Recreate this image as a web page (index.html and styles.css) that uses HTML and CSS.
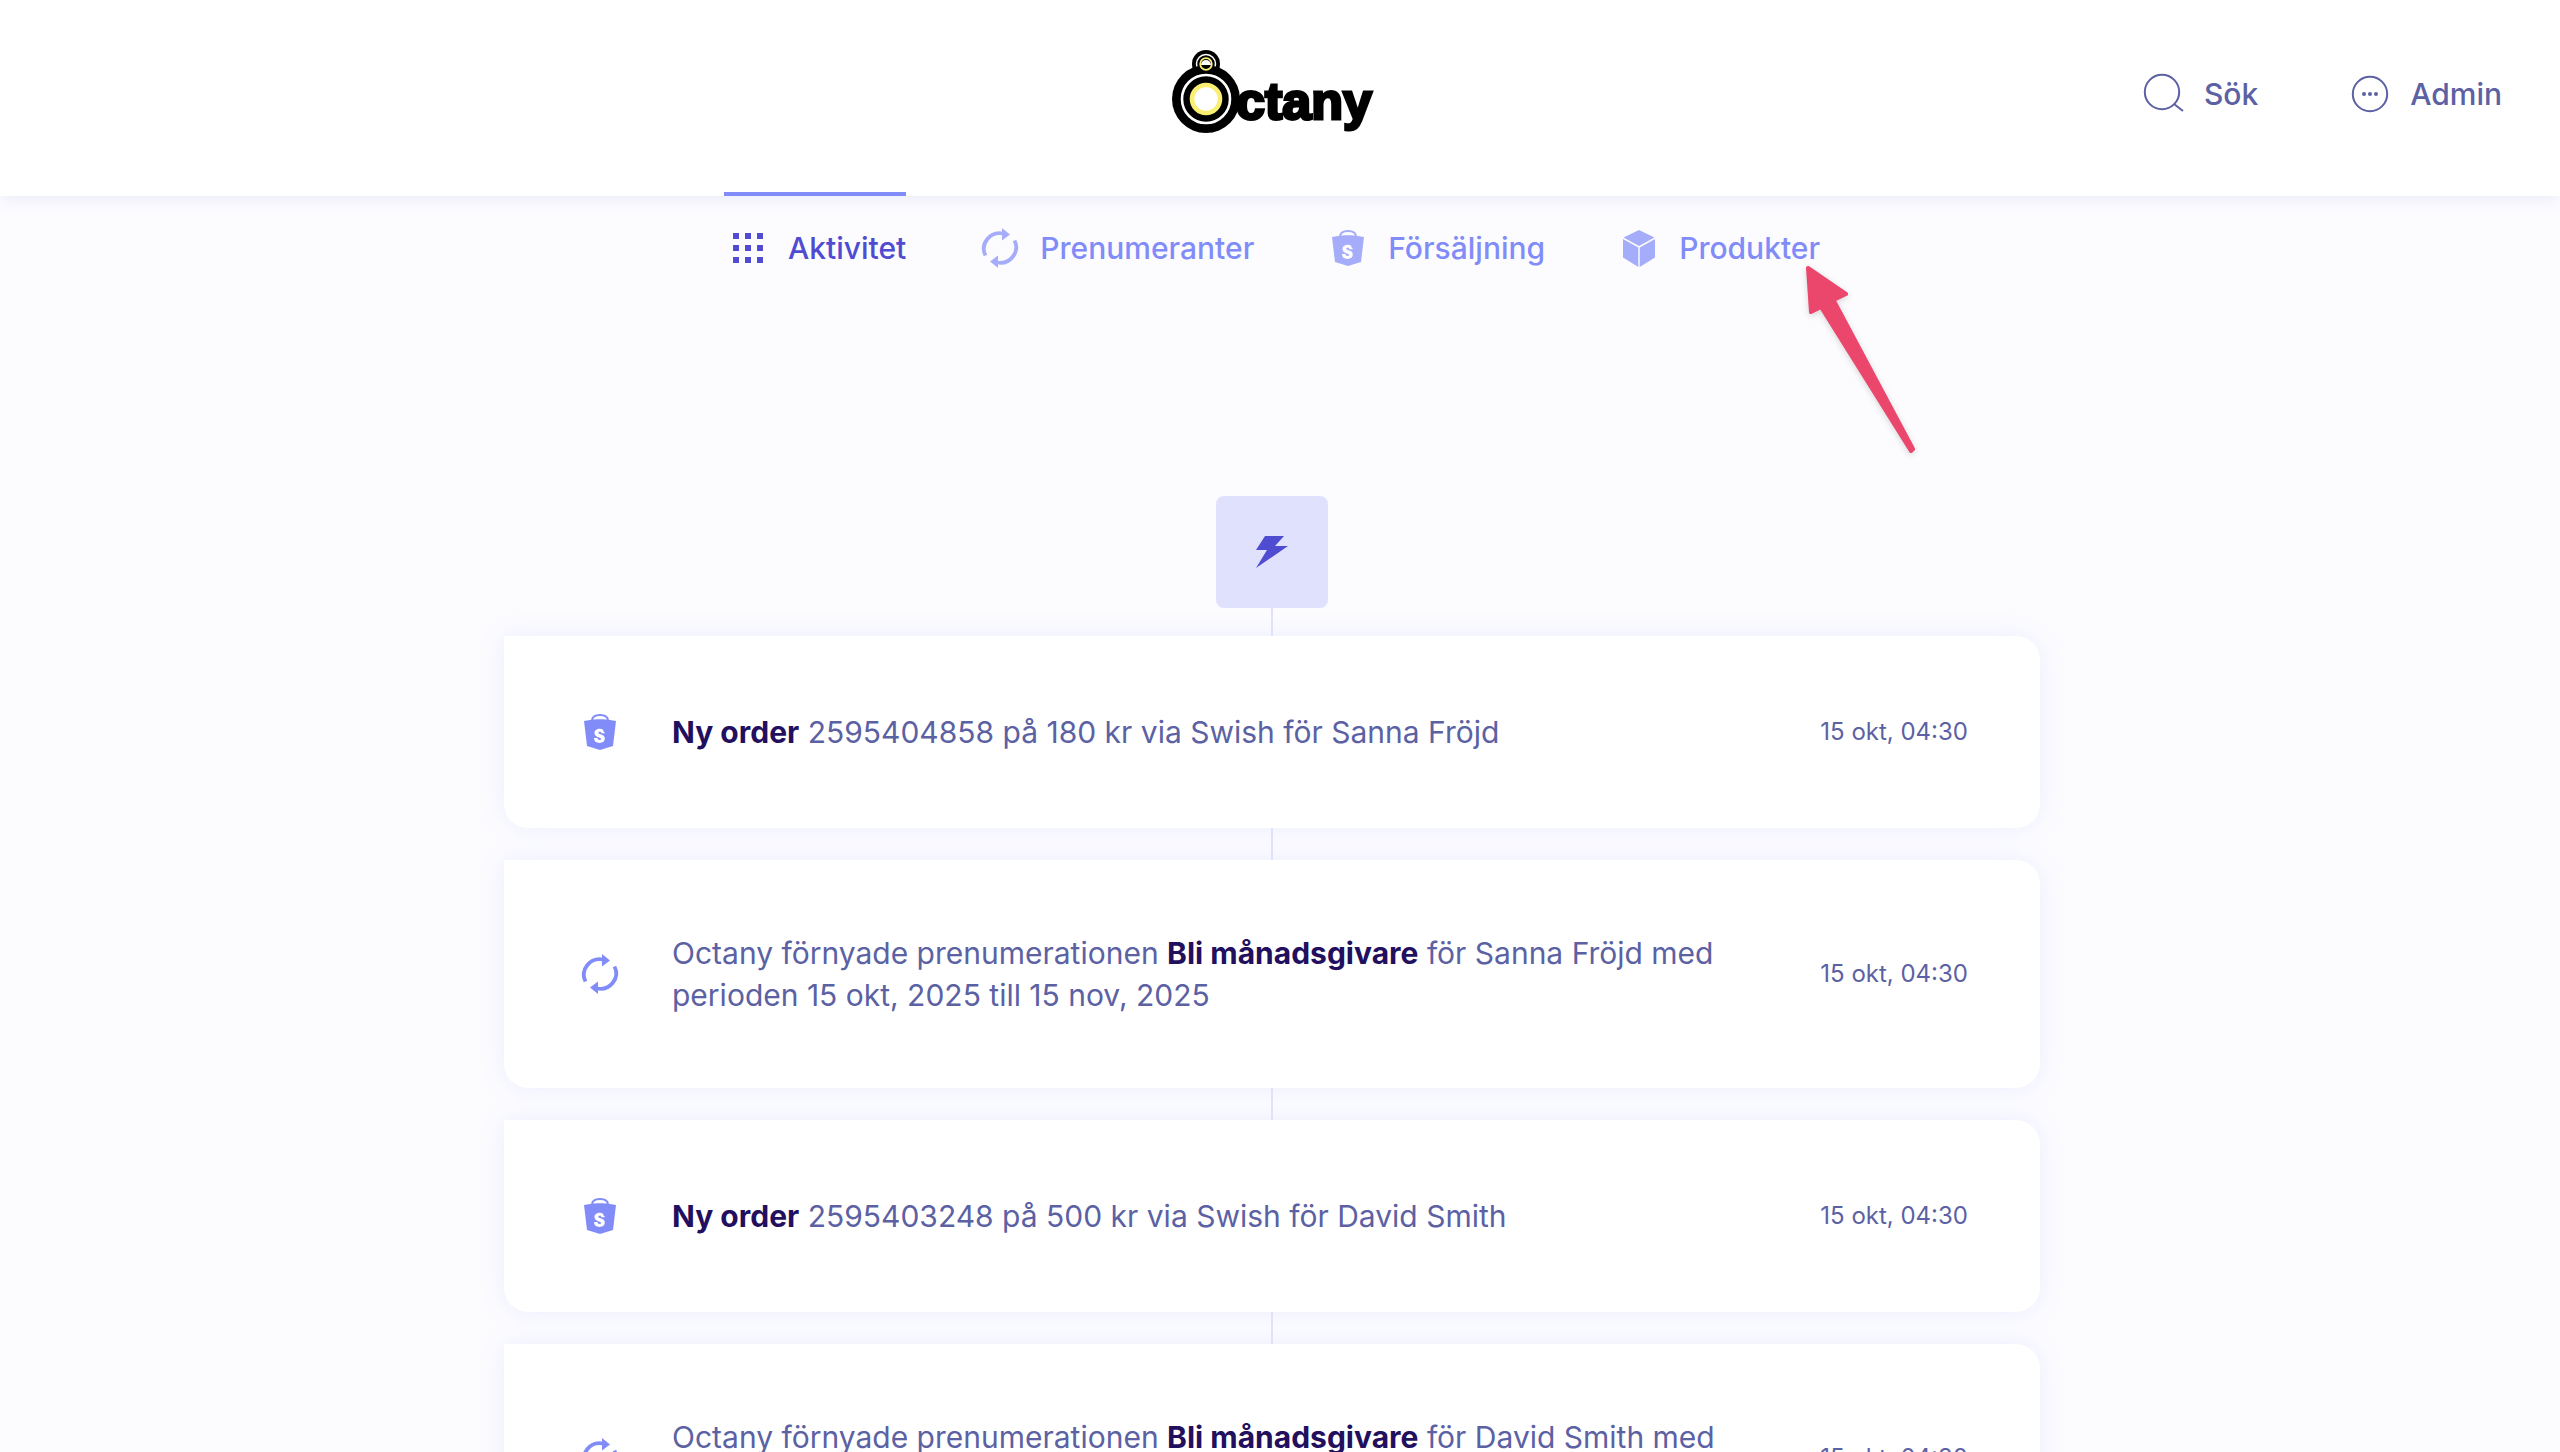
FILE: index.html
```html
<!DOCTYPE html>
<html lang="sv">
<head>
    <meta charset="UTF-8">
    <meta name="viewport" content="width=device-width, initial-scale=1.0">
    <title>Octany</title>
    <link rel="stylesheet" href="styles.css">
</head>
<body>
    <!-- Shared icons -->
    <svg class="sprite" aria-hidden="true">
        <symbol id="icon-bag" viewBox="0 0 48 48">
            <path d="M16 13c0-4 3-6 8-6s8 2 8 6" fill="none" stroke="currentColor" stroke-width="2"/>
            <path fill="currentColor" fill-rule="evenodd" d="M8 13l6-1c4-1 16-1 20 0l6 1-3 25-13 4-13-4zM27.500 23.500h-0c0-2-1-2.800-3.500-2.800-3.300 0-5.500 1.700-5.500 4.300 0 2.400 1.600 3.500 4.500 4.400 1.500.5 2 .8 2 1.500s-.5 1-1.500 1c-1.300 0-2-.6-2-1.900h-3.500c0 3.200 2 4.900 5.500 4.900s5.300-1.600 5.300-4.400c0-2.400-1.500-3.500-4.400-4.300-1.600-.5-2.100-.8-2.100-1.400s.5-1 1.400-1c1.100 0 1.600.5 1.700 1.500h3.400c0-.7-.4-1.300-1.300-1.800z"/>
        </symbol>
        <symbol id="icon-renew" viewBox="0 0 48 48">
            <path d="M9.500 31.500A16 15.500 0 0 1 27 9.500M38.500 16.500A16 15.500 0 0 1 21 38.500" fill="none" stroke="currentColor" stroke-width="3.800"/>
            <path fill="currentColor" d="M26 4l8 6.500-8 6zM22 44l-8-6.500 8-6z"/>
        </symbol>
    </svg>

    <header class="header">
        <div class="header-inner">
            <a class="logo" href="#" aria-label="Octany">
                <svg width="204" height="96" viewBox="0 0 204 96">
                    <circle cx="36" cy="18" r="14"/>
                    <circle cx="36" cy="18" r="9.500" fill="none" stroke="#fff" stroke-width="1.500"/>
                    <circle cx="36" cy="53" r="34"/>
                    <circle cx="36" cy="53" r="24" fill="none" stroke="#fff" stroke-width="2.600"/>
                    <circle cx="36" cy="53" r="14" fill="#fff" stroke="#f9ef72" stroke-width="4.600"/>
                    <path d="M31 19a5 5 0 1 1 10 0z" fill="#fff"/>
                    <circle cx="36" cy="18" r="5.800" fill="none" stroke="#f9ef72" stroke-width="1.800"/>
                    <text class="logo-text" x="66" y="73">ctany</text>
                </svg>
            </a>
            <div class="tools">
                <button class="tool" type="button">
                    <svg width="48" height="48" viewBox="0 0 48 48" fill="none" stroke="currentColor" stroke-width="2">
                        <circle cx="22" cy="22" r="17.200"/>
                        <path d="M34 34l9 7"/>
                    </svg>
                    Sök
                </button>
                <button class="tool" type="button">
                    <svg width="48" height="48" viewBox="0 0 48 48" fill="none" stroke="currentColor" stroke-width="2">
                        <circle cx="24" cy="24" r="17.200"/>
                        <g fill="currentColor" stroke="none">
                            <circle cx="18" cy="24" r="2"/>
                            <circle cx="24" cy="24" r="2"/>
                            <circle cx="30" cy="24" r="2"/>
                        </g>
                    </svg>
                    Admin
                </button>
            </div>
        </div>
    </header>

    <nav class="nav">
        <a class="nav-item active" href="#">
            <svg width="48" height="48" viewBox="0 0 48 48" fill="currentColor">
                <path d="M9 9h6v6H9zM21 9h6v6h-6zM33 9h6v6h-6zM9 21h6v6H9zM21 21h6v6h-6zM33 21h6v6h-6zM9 33h6v6H9zM21 33h6v6h-6zM33 33h6v6h-6z"/>
            </svg>
            Aktivitet
        </a>
        <a class="nav-item" href="#">
            <svg width="48" height="48"><use href="#icon-renew"/></svg>
            Prenumeranter
        </a>
        <a class="nav-item" href="#">
            <svg width="48" height="48"><use href="#icon-bag"/></svg>
            Försäljning
        </a>
        <a class="nav-item" href="#">
            <svg width="48" height="48" viewBox="0 0 48 48" fill="currentColor">
                <path d="M24 6l15.500 7.500L24 22 8.500 13.500zM8 15l15.300 8.500V43L8 33.500zM40 15l-15.300 8.500V43L40 33.500z"/>
            </svg>
            Produkter
            <svg class="pointer" width="112" height="190" viewBox="0 0 112 190">
                <path d="M4 4L42 30 29.500 36 109 185 107 187 17 43 7 48z" fill="#eb466c" stroke="#eb466c" stroke-width="4" stroke-linejoin="round"/>
            </svg>
        </a>
    </nav>

    <main class="timeline">
        <div class="marker">
            <svg width="48" height="48" viewBox="0 0 48 48" fill="#504cd2">
                <path d="M17 8h19l-9 10h13L8 40l11-18H8z"/>
            </svg>
        </div>

        <article class="card">
            <svg class="card-icon" width="48" height="48"><use href="#icon-bag"/></svg>
            <p class="card-text"><strong>Ny order</strong> 2595404858 på 180 kr via Swish för Sanna Fröjd</p>
            <time class="card-time">15 okt, 04:30</time>
        </article>

        <article class="card">
            <svg class="card-icon" width="48" height="48"><use href="#icon-renew"/></svg>
            <p class="card-text">Octany förnyade prenumerationen <strong>Bli månadsgivare</strong> för Sanna Fröjd med perioden 15 okt, 2025 till 15 nov, 2025</p>
            <time class="card-time">15 okt, 04:30</time>
        </article>

        <article class="card">
            <svg class="card-icon" width="48" height="48"><use href="#icon-bag"/></svg>
            <p class="card-text"><strong>Ny order</strong> 2595403248 på 500 kr via Swish för David Smith</p>
            <time class="card-time">15 okt, 04:30</time>
        </article>

        <article class="card">
            <svg class="card-icon" width="48" height="48"><use href="#icon-renew"/></svg>
            <p class="card-text">Octany förnyade prenumerationen <strong>Bli månadsgivare</strong> för David Smith med perioden 15 okt, 2025 till 15 nov, 2025</p>
            <time class="card-time">15 okt, 04:30</time>
        </article>
    </main>
</body>
</html>
```
FILE: styles.css
```css
* {
    box-sizing: border-box;
}
html {
    scrollbar-width: none;
}
body {
    margin: 0;
    background: #fcfcff;
    color: #5b61a3;
    font-family: Inter, "Noto Sans", sans-serif;
    font-size: 30px;
    line-height: 42px;
}
svg {
    flex: none;
}
.sprite {
    position: absolute;
    width: 0;
    height: 0;
}

/* Header */
.header {
    padding: 0 58px 0 42px;
    background: #fff;
    box-shadow: 0 2px 16px rgba(90, 100, 190, 0.12);
}
.header-inner {
    display: grid;
    grid-template-columns: 1fr auto 1fr;
    align-items: center;
    height: 196px;
    padding-bottom: 8px;
}
.logo {
    grid-column: 2;
    display: block;
    color: #000;
}
.logo svg {
    display: block;
}
.logo-text {
    font-family: "Liberation Sans", Arial, sans-serif;
    font-size: 52px;
    font-weight: bold;
    stroke: #000;
    stroke-width: 3px;
}
.tools {
    display: flex;
    justify-content: flex-end;
    gap: 88px;
}
.tool {
    display: flex;
    align-items: center;
    gap: 16px;
    padding: 0;
    border: 0;
    background: none;
    color: inherit;
    font: inherit;
    font-weight: 500;
    cursor: pointer;
}

/* Navigation */
.nav {
    display: flex;
    justify-content: center;
    gap: 70px;
    padding-right: 16px;
}
.nav-item {
    position: relative;
    display: flex;
    align-items: center;
    gap: 16px;
    height: 104px;
    color: #818cf8;
    font-weight: 500;
    text-decoration: none;
}
.nav-item svg {
    opacity: 0.7;
}
.nav-item.active {
    color: #504cd2;
}
.nav-item.active svg {
    opacity: 1;
}
.nav-item.active::before {
    content: "";
    position: absolute;
    top: -4px;
    left: 0;
    right: 0;
    height: 4px;
    background: #818cf8;
}
.nav-item .pointer {
    position: absolute;
    top: 68px;
    right: -96px;
    opacity: 1;
    filter: drop-shadow(0 2px 3px rgba(0, 0, 0, 0.15));
}

/* Timeline */
.timeline {
    display: flex;
    flex-direction: column;
    align-items: center;
    gap: 32px;
    padding: 196px 16px 32px 0;
}
.marker {
    display: flex;
    align-items: center;
    justify-content: center;
    width: 112px;
    height: 112px;
    margin-bottom: -4px;
    border-radius: 8px;
    background: #e0e1fd;
}
.card {
    position: relative;
    display: flex;
    align-items: center;
    gap: 48px;
    width: 100%;
    max-width: 1536px;
    min-height: 192px;
    padding: 72px;
    border-radius: 0 24px 24px 24px;
    background: #fff;
    box-shadow: 0 0 24px rgba(129, 140, 248, 0.14);
}
/* line up to the previous card */
.card::before {
    content: "";
    position: absolute;
    bottom: 100%;
    left: 50%;
    width: 2px;
    height: 32px;
    margin-left: -1px;
    background: #e0e1fd;
}
.marker + .card::before {
    height: 28px;
}
.card-icon {
    color: #818cf8;
}
.card-text {
    flex: 1;
    margin: 0;
}
.card-text strong {
    color: #220f5e;
    font-weight: 700;
}
.card-time {
    font-size: 24px;
    white-space: nowrap;
}
```
